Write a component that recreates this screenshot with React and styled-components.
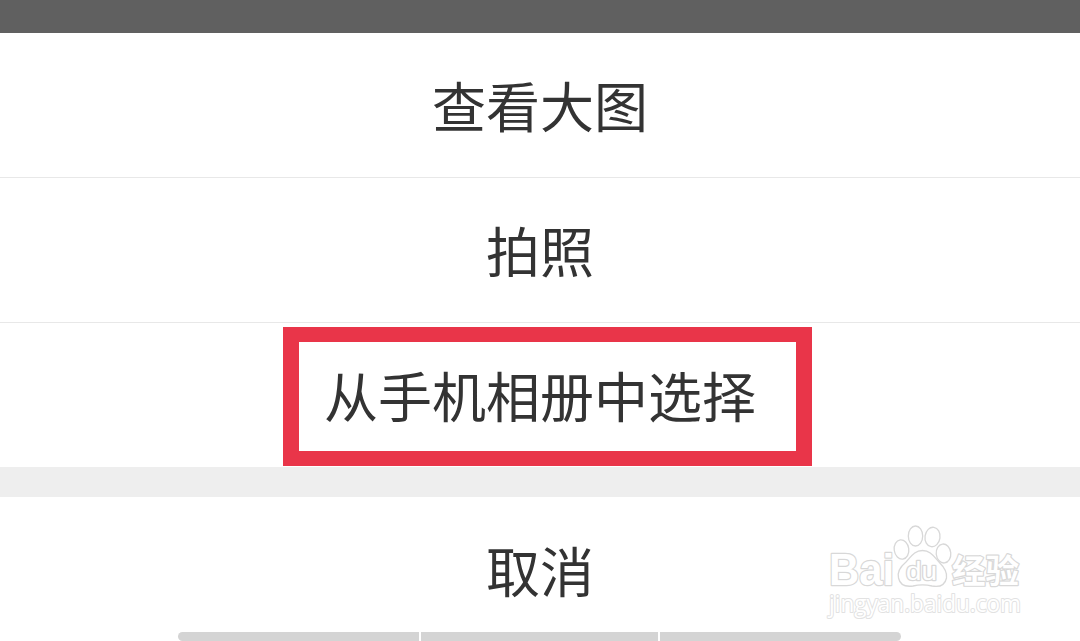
import React from 'react';
import styled, { createGlobalStyle } from 'styled-components';

const App = () => {
  return (
    <>
      <GlobalStyle />
      <Screen>
        <Backdrop />
        <Sheet>
          <Option $divided>查看大图</Option>
          <Option $divided>拍照</Option>
          <Option>
            从手机相册中选择
            <Highlight />
          </Option>
          <Gap />
          <Cancel>取消</Cancel>
        </Sheet>
        <BottomBar>
          <Segment $width="241px" $round="5px 0 0 5px" />
          <Segment $width="237px" />
          <Segment $width="241px" $round="0 5px 5px 0" />
        </BottomBar>
        <Watermark viewBox="0 0 210 120">
          <g className="paw">
            <ellipse cx="81.5" cy="34.5" rx="7.3" ry="9.7" transform="rotate(-8 81.5 34.5)" />
            <ellipse cx="95.5" cy="21" rx="7.2" ry="10" />
            <ellipse cx="112.5" cy="22" rx="7.5" ry="9.8" transform="rotate(8 112.5 22)" />
            <ellipse cx="123.5" cy="38.5" rx="7.3" ry="9.5" transform="rotate(-6 123.5 38.5)" />
            <path d="M102.5 35.5 C94 35.5 91 42 86 47 C80 52 77 57 78.5 63 C80 70 86 72 93 71 C99 69.5 106 69.5 112 71 C120 72.5 125 70 126.5 63 C127.5 57 124 52 119 47 C114 42 111 35.5 102.5 35.5Z" />
          </g>
          <g className="brand">
            <text x="9" y="70" fontSize="44" textLength="65" lengthAdjust="spacingAndGlyphs">Bai</text>
            <text className="du" x="86" y="65" fontSize="25" textLength="31" lengthAdjust="spacingAndGlyphs">du</text>
            <text className="cjk" x="132" y="67.5" fontSize="33" textLength="67" lengthAdjust="spacingAndGlyphs">经验</text>
          </g>
          <text className="url" x="9" y="96.5" fontSize="23.5" textLength="192" lengthAdjust="spacingAndGlyphs">
            jingyan.baidu.com
          </text>
        </Watermark>
      </Screen>
    </>
  );
};

const GlobalStyle = createGlobalStyle`
  body {
    margin: 0;
    overflow: hidden;
  }
`;

const Screen = styled.main`
  position: relative;
  display: flex;
  flex-direction: column;
  width: 1080px;
  height: 641px;
  overflow: hidden;
  background: #fff;
  color: #333;
  font-family: 'Noto Sans CJK SC', sans-serif;
`;

const Backdrop = styled.div`
  flex: none;
  height: 33px;
  background: #606060;
`;

const Sheet = styled.div`
  flex: 1;
  min-height: 0;
`;

const Option = styled.div`
  position: relative;
  display: flex;
  align-items: center;
  justify-content: center;
  box-sizing: border-box;
  height: ${({ $divided }) => ($divided ? '145px' : '144px')};
  border-bottom: ${({ $divided }) => ($divided ? '1px solid #e8e8e8' : 'none')};
  padding-bottom: 1px;
  font-size: 54px;
  font-weight: 400;
  line-height: 1;
`;

/* Red frame around the chosen option */
const Highlight = styled.span`
  position: absolute;
  top: 4px;
  left: 283px;
  box-sizing: border-box;
  width: 529px;
  height: 139px;
  border: solid #e93549;
  border-width: 15px 16px;
`;

const Gap = styled.div`
  height: 30px;
  background: #eee;
`;

const Cancel = styled(Option)`
  padding-top: 3px;
`;

const BottomBar = styled.div`
  display: flex;
  flex: none;
  gap: 2px;
  width: 723px;
  height: 9px;
  margin-left: 178px;
`;

const Segment = styled.div`
  width: ${({ $width }) => $width};
  border-radius: ${({ $round }) => $round || 0};
  background: #d4d4d4;
`;

const Watermark = styled.svg`
  position: absolute;
  left: 820px;
  top: 515px;
  width: 210px;
  height: 120px;
  fill: #fff;
  stroke: #d8d8d8;

  .paw {
    stroke-width: 1.3;
  }

  text {
    font-family: 'Liberation Sans', sans-serif;
    paint-order: stroke;
    stroke-width: 2.4;
    stroke-linejoin: round;
  }

  .brand {
    font-weight: 700;
  }

  .du {
    font-weight: 400;
  }

  .cjk {
    font-family: 'Noto Sans CJK SC', sans-serif;
  }

  .url {
    font-family: 'Open Sans', sans-serif;
    stroke: #e2e2e2;
    stroke-width: 2;
  }
`;

export default App;
